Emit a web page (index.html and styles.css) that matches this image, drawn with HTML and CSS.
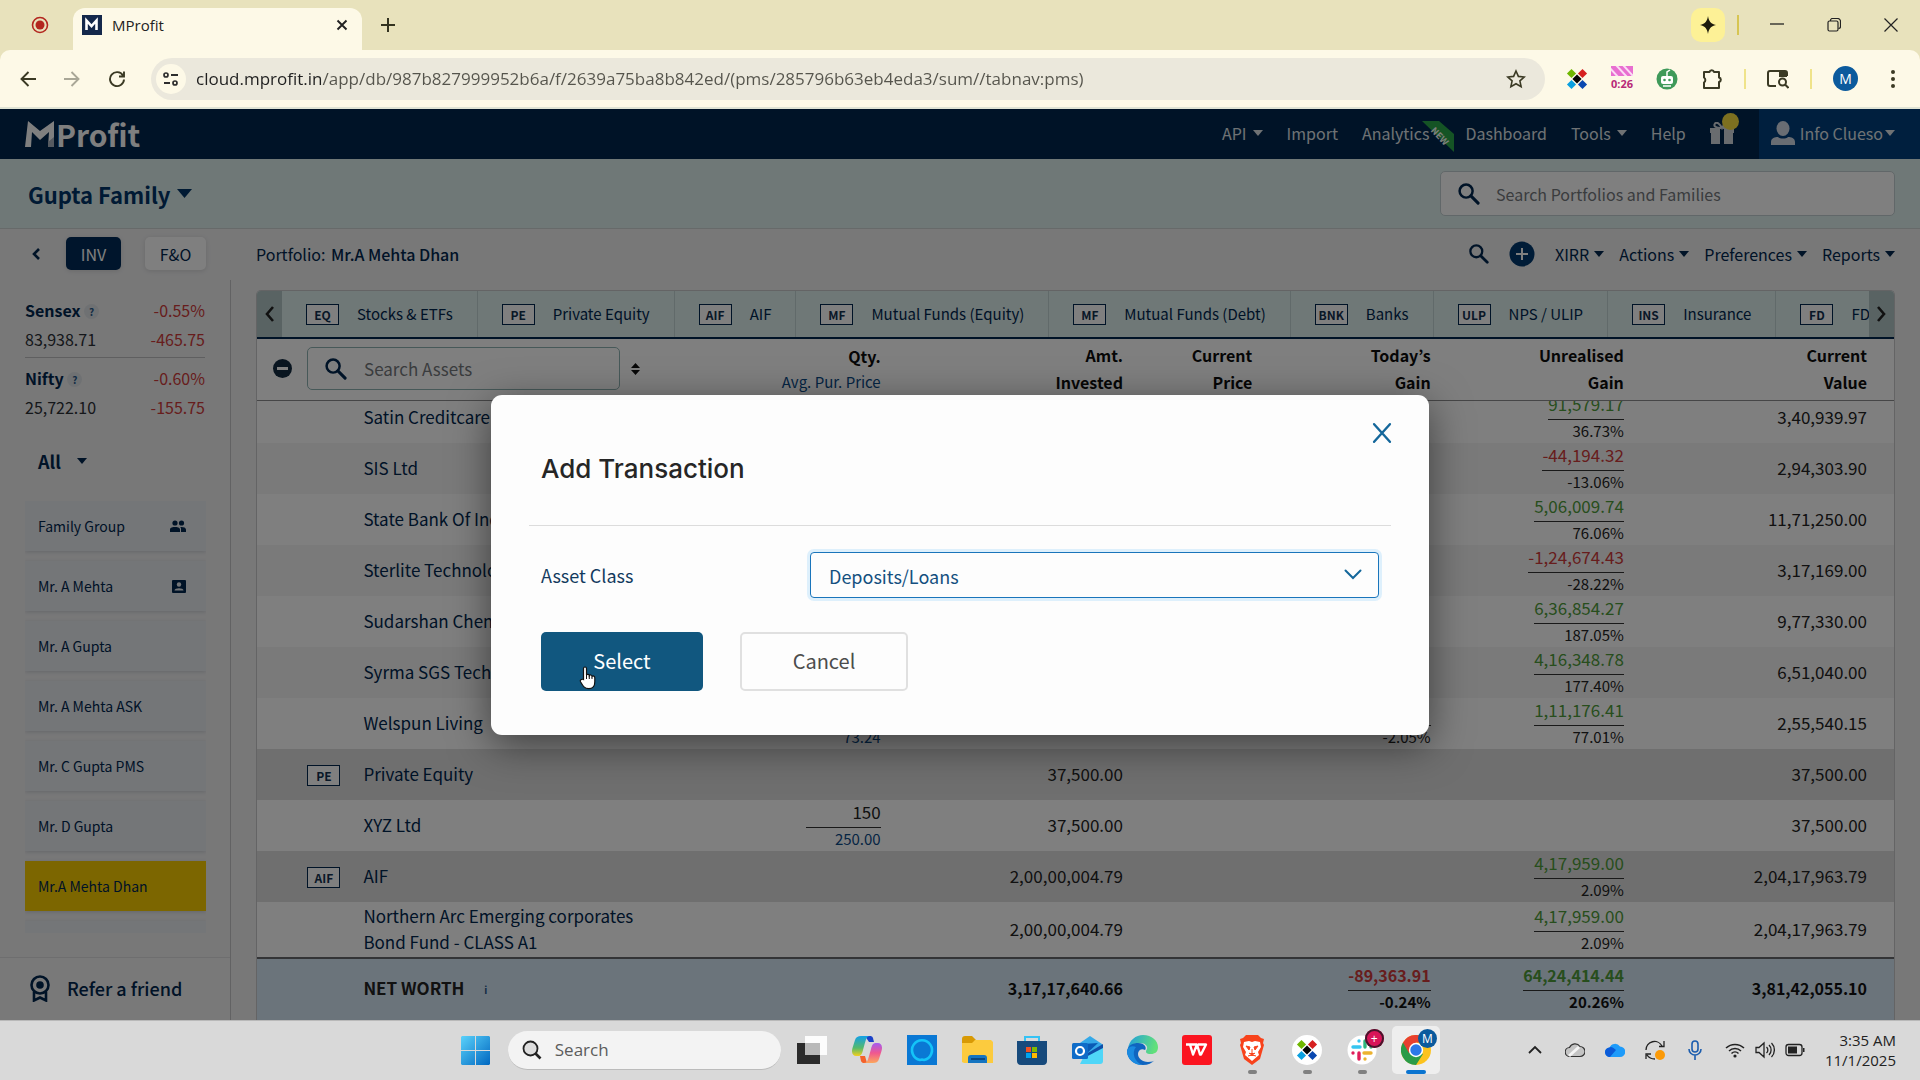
FILE: index.html
```html
<!DOCTYPE html>
<html lang="en">
<head>
<meta charset="utf-8">
<title>MProfit</title>
<link rel="stylesheet" href="styles.css">
</head>
<body>
<svg width="0" height="0" class="sprite" aria-hidden="true">
  <symbol id="search" viewBox="0 0 24 24"><circle cx="9.500" cy="9.500" r="6.800" fill="none" stroke="currentColor" stroke-width="2.600"/><path d="M14.500 14.500L22 22" stroke="currentColor" stroke-width="3.200" stroke-linecap="round"/></symbol>
  <symbol id="caret" viewBox="0 0 10 6"><path d="M0 0h10L5 6z" fill="currentColor"/></symbol>
  <symbol id="cross" viewBox="0 0 20 20"><path d="M2 2l16 16M18 2L2 18" stroke="currentColor" stroke-width="2.200" stroke-linecap="round"/></symbol>
  <symbol id="pinwheel" viewBox="0 0 24 24"><path d="M6 1l5 5-5 5-5-5z" fill="#6fb700"/><path d="M18 1l5 5-5 5-5-5z" fill="#d62020"/><path d="M6 13l5 5-5 5-5-5z" fill="#0aa0e0"/><path d="M18 13l5 5-5 5-5-5z" fill="#0a48b0"/><path d="M12 7l5 5-5 5-5-5z" fill="#050505"/></symbol>
</svg>

<header class="browser">
  <div class="tabstrip">
    <svg class="record" width="18" height="18" viewBox="0 0 18 18"><circle cx="9" cy="9" r="7.500" fill="none" stroke="#b3261e" stroke-width="1.600"/><circle cx="9" cy="9" r="4.500" fill="#b3261e"/></svg>
    <div class="tab">
      <svg width="20" height="20" viewBox="0 0 20 20"><path fill="#14284b" d="M0 0h20v20H0z"/><path d="M4.500 15V5.500l5 5.500 5-5.500V15" fill="none" stroke="#fff" stroke-width="2.600"/></svg>
      <span class="tab-title">MProfit</span>
      <button class="plain" aria-label="Close tab"><svg width="12" height="12" viewBox="0 0 12 12"><path d="M1.500 1.500l9 9M10.500 1.500l-9 9" stroke="#222" stroke-width="1.900"/></svg></button>
    </div>
    <button class="plain new-tab" aria-label="New tab"><svg width="14" height="14" viewBox="0 0 14 14"><path d="M7 0v14M0 7h14" stroke="#333320" stroke-width="2"/></svg></button>
    <div class="window-controls">
      <button class="plain sparkle" aria-label="Assistant"><svg width="16" height="18" viewBox="0 0 16 18"><path d="M8 0c1 5.500 2.500 7.500 8 9-5.500 1.500-7 3.500-8 9-1-5.500-2.500-7.500-8-9 5.500-1.500 7-3.500 8-9z" fill="#1d1b0c"/></svg></button>
      <span class="divider gold"></span>
      <button class="plain win" aria-label="Minimise"><svg width="14" height="14" viewBox="0 0 14 14"><path d="M0 6h14" stroke="#222" stroke-width="1.300"/></svg></button>
      <button class="plain win" aria-label="Restore"><svg width="14" height="14" viewBox="0 0 14 14"><rect x="1" y="3" width="10" height="10" rx="1.500" fill="none" stroke="#222" stroke-width="1.200"/><path d="M3.500 3V2.500a2 2 0 012-2h5a3 3 0 013 3v5a2 2 0 01-2 2" fill="none" stroke="#222" stroke-width="1.200"/></svg></button>
      <button class="plain win" aria-label="Close"><svg width="14" height="14" viewBox="0 0 14 14"><path d="M.5.5l13 13M13.500.5l-13 13" stroke="#222" stroke-width="1.200"/></svg></button>
    </div>
  </div>
  <div class="toolbar">
    <button class="plain nav-btn" aria-label="Back"><svg width="16" height="16" viewBox="0 0 16 16"><path d="M8.500 1L1.500 8l7 7M2 8h14" fill="none" stroke="#3b3a24" stroke-width="1.900"/></svg></button>
    <button class="plain nav-btn" aria-label="Forward"><svg width="16" height="16" viewBox="0 0 16 16"><path d="M7.500 1l7 7-7 7M14 8H0" fill="none" stroke="#a9a797" stroke-width="1.900"/></svg></button>
    <button class="plain nav-btn" aria-label="Reload"><svg width="18" height="18" viewBox="0 0 18 18"><path d="M15 5.500A7 7 0 1016 9.500M16 1.500v5h-5" fill="none" stroke="#3b3a24" stroke-width="1.900"/></svg></button>
    <div class="omnibox">
      <span class="site-chip"><svg width="16" height="16" viewBox="0 0 16 16"><path d="M8 4h7M1 12h6" stroke="#2d2d2d" stroke-width="2"/><circle cx="3" cy="4" r="2" fill="none" stroke="#2d2d2d" stroke-width="1.700"/><circle cx="12" cy="12" r="2" fill="none" stroke="#2d2d2d" stroke-width="1.700"/></svg></span>
      <input class="url" aria-label="Address" value="cloud.mprofit.in/app/db/987b827999952b6a/f/2639a75ba8b842ed/(pms/285796b63eb4eda3/sum//tabnav:pms)">
      <svg width="20" height="20" viewBox="0 0 20 20"><path d="M10 2l2.400 5.400 5.800.6-4.300 3.900 1.200 5.800L10 14.700l-5.100 3 1.200-5.800L1.800 8l5.800-.6z" fill="none" stroke="#3b3a24" stroke-width="1.600"/></svg>
    </div>
    <div class="extensions">
      <svg width="22" height="22"><use href="#pinwheel"/></svg>
      <span class="timer"><svg width="22" height="10" viewBox="0 0 22 10"><path fill="#e86fd0" d="M0 0h22v10H0z"/><path d="M5-1l11 12M12-1l11 12M-2 1l10 11" stroke="#fbdcf5" stroke-width="2"/></svg><b>0:26</b></span>
      <svg width="22" height="22" viewBox="0 0 22 22"><circle cx="11" cy="11" r="10.500" fill="#3f9a5a"/><path d="M11 8V4l3-2" stroke="#fff" stroke-width="1.500" fill="none"/><rect x="5" y="8" width="12" height="8" rx="2" fill="#fff"/><circle cx="8.500" cy="12" r="1.300" fill="#3f9a5a"/><circle cx="13.500" cy="12" r="1.300" fill="#3f9a5a"/><path d="M7 18h8" stroke="#fff" stroke-width="1.500"/></svg>
      <svg width="22" height="22" viewBox="0 0 22 22"><path d="M3 4h5.500a2.300 2.300 0 014.500 0h5v5.500a2.300 2.300 0 010 4.500v6H3v-5.500a3 3 0 000-5z" fill="none" stroke="#3b3a24" stroke-width="2" stroke-linejoin="round"/></svg>
      <span class="divider"></span>
      <svg width="22" height="20" viewBox="0 0 22 20"><path d="M9 17H3a2 2 0 01-2-2V4a2 2 0 012-2h15a2 2 0 012 2v3" fill="none" stroke="#3b3a24" stroke-width="2"/><path d="M12 2h8v6h-8z" fill="#3b3a24"/><circle cx="15.500" cy="13" r="3.500" fill="#fdf9e7" stroke="#3b3a24" stroke-width="2"/><path d="M18 15.500l3.500 3.500" stroke="#3b3a24" stroke-width="2"/></svg>
      <span class="divider"></span>
      <span class="avatar">M</span>
      <svg width="4" height="18" viewBox="0 0 4 18"><g fill="#3b3a24"><circle cx="2" cy="2" r="2"/><circle cx="2" cy="9" r="2"/><circle cx="2" cy="16" r="2"/></g></svg>
    </div>
  </div>
</header>

<div class="app">
  <div class="app-bar">
    <svg class="logo" width="124" height="41" viewBox="0 0 124 41"><path d="M0 29L3 3l12 10L29 3v26h-6l1-15-9 8-8-8-1 15z" fill="#fff"/><path d="M23 24l6-5v10h-6z" fill="#aab4c0"/><text x="31" y="29" class="logo-text">Profit</text></svg>
    <nav class="main-nav">
      <a href="#">API <svg class="caret" width="10" height="6"><use href="#caret"/></svg></a>
      <a href="#">Import</a>
      <a href="#" class="analytics">Analytics<svg class="ribbon" width="32" height="32" viewBox="0 0 32 32"><path d="M0 0h17l15 13v18z" fill="#2ba84a"/><text x="13" y="1" transform="rotate(46)" class="ribbon-text">NEW</text></svg></a>
      <a href="#">Dashboard</a>
      <a href="#">Tools <svg class="caret" width="10" height="6"><use href="#caret"/></svg></a>
      <a href="#">Help</a>
      <a href="#" class="gift" aria-label="Offers"><svg width="24" height="22" viewBox="0 0 24 22"><path d="M0 6h24v5h-1v11H1V11H0z" fill="#d3d9df"/><path d="M10 6h4v16h-4z" fill="#00264e"/><path d="M11 6C6 6 3 4 5 1.500 7-.5 10 2 12 6c2-4 5-6.500 7-4.500 2 2.500-1 4.500-6 4.500" fill="none" stroke="#d3d9df" stroke-width="2"/></svg><span class="dot"></span></a>
    </nav>
    <a href="#" class="account"><svg width="24" height="24" viewBox="0 0 24 24"><ellipse cx="12" cy="7.500" rx="6.500" ry="7.500" fill="#d3dbe6"/><path d="M0 24v-3c0-4 4-5 7-5 2 2 8 2 10 0 3 0 7 1 7 5v3z" fill="#d3dbe6"/></svg><span>Info Clueso</span><svg class="caret" width="10" height="6"><use href="#caret"/></svg></a>
  </div>

  <div class="family-bar">
    <button class="plain family">Gupta Family <svg width="15" height="9"><use href="#caret"/></svg></button>
    <label class="box family-search"><svg width="23" height="23"><use href="#search"/></svg><input type="search" placeholder="Search Portfolios and Families" aria-label="Search Portfolios and Families"></label>
  </div>

  <div class="portfolio-bar">
    <button class="plain back" aria-label="Collapse"><svg width="8" height="12" viewBox="0 0 8 12"><path d="M7 1L2 6l5 5" fill="none" stroke="#00264e" stroke-width="2.600"/></svg></button>
    <button class="mode active">INV</button>
    <button class="mode">F&amp;O</button>
    <p class="portfolio-name">Portfolio: <b>Mr.A Mehta Dhan</b></p>
    <div class="actions">
      <button class="plain" aria-label="Search"><svg width="21" height="21"><use href="#search"/></svg></button>
      <button class="plain add" aria-label="Add transaction"><svg width="26" height="26" viewBox="0 0 26 26"><circle cx="13" cy="13" r="12.500" fill="#00396f"/><path d="M13 7v12M7 13h12" stroke="#fff" stroke-width="2"/></svg></button>
      <button class="plain">XIRR <svg width="10" height="6"><use href="#caret"/></svg></button>
      <button class="plain">Actions <svg width="10" height="6"><use href="#caret"/></svg></button>
      <button class="plain">Preferences <svg width="10" height="6"><use href="#caret"/></svg></button>
      <button class="plain">Reports <svg width="10" height="6"><use href="#caret"/></svg></button>
    </div>
  </div>

  <div class="workspace">
    <aside class="sidebar">
      <div class="index">
        <div class="pair"><b>Sensex <i class="hint">?</i></b><span class="loss">-0.55%</span></div>
        <div class="pair"><span>83,938.71</span><span class="loss">-465.75</span></div>
      </div>
      <div class="index">
        <div class="pair"><b>Nifty <i class="hint">?</i></b><span class="loss">-0.60%</span></div>
        <div class="pair"><span>25,722.10</span><span class="loss">-155.75</span></div>
      </div>
      <button class="plain filter">All <svg width="10" height="6"><use href="#caret"/></svg></button>
      <ul class="portfolios">
        <li><a href="#">Family Group <svg width="16" height="12" viewBox="0 0 16 12"><g fill="#00264e"><circle cx="5" cy="3" r="2.600"/><circle cx="11.500" cy="3" r="2.600"/><path d="M0 12V9.500C0 7.500 3 7 5 7s5 .5 5 2.500V12zM11 12V9c0-1-.4-1.600-1-2 3-.3 6 .4 6 2.500V12z"/></g></svg></a></li>
        <li><a href="#">Mr. A Mehta <svg width="14" height="13" viewBox="0 0 14 13"><rect x="0" y="0" width="14" height="13" rx="1" fill="#00264e"/><circle cx="7" cy="4.500" r="2.200" fill="#e8ecf1"/><path d="M2.500 10.500c0-3 9-3 9 0z" fill="#e8ecf1"/></svg></a></li>
        <li><a href="#">Mr. A Gupta</a></li>
        <li><a href="#">Mr. A Mehta ASK</a></li>
        <li><a href="#">Mr. C Gupta PMS</a></li>
        <li><a href="#">Mr. D Gupta</a></li>
        <li><a href="#" class="current">Mr.A Mehta Dhan</a></li>
        <li><a href="#" aria-label="Next portfolio"></a></li>
      </ul>
      <a href="#" class="refer"><svg width="20" height="27" viewBox="0 0 20 27"><circle cx="10" cy="10" r="8.500" fill="none" stroke="#00264e" stroke-width="2.600"/><circle cx="10" cy="10" r="3.800" fill="#00264e"/><path d="M4 17v8.500l6-3 6 3V17" fill="none" stroke="#00264e" stroke-width="2.600"/></svg>Refer a friend</a>
    </aside>

    <main class="holdings">
      <nav class="classes">
        <button class="plain arrow" aria-label="Previous"><svg width="9" height="16" viewBox="0 0 9 16"><path d="M8 1L2 8l6 7" fill="none" stroke="#222" stroke-width="2.600"/></svg></button>
        <div class="class-list">
          <a href="#"><span class="tag">EQ</span>Stocks &amp; ETFs</a>
          <a href="#"><span class="tag">PE</span>Private Equity</a>
          <a href="#"><span class="tag">AIF</span>AIF</a>
          <a href="#"><span class="tag">MF</span>Mutual Funds (Equity)</a>
          <a href="#"><span class="tag">MF</span>Mutual Funds (Debt)</a>
          <a href="#"><span class="tag">BNK</span>Banks</a>
          <a href="#"><span class="tag">ULP</span>NPS / ULIP</a>
          <a href="#"><span class="tag">INS</span>Insurance</a>
          <a href="#"><span class="tag">FD</span>FD</a>
        </div>
        <button class="plain arrow" aria-label="Next"><svg width="9" height="16" viewBox="0 0 9 16"><path d="M1 1l6 7-6 7" fill="none" stroke="#222" stroke-width="2.600"/></svg></button>
      </nav>

      <table class="grid head">
        <colgroup><col class="c-tag"><col class="c-name"><col class="c-qty"><col class="c-amt"><col class="c-price"><col class="c-today"><col class="c-gain"><col class="c-value"></colgroup>
        <tr>
          <th colspan="2"><div class="asset-search">
            <svg width="19" height="19" viewBox="0 0 19 19"><circle cx="9.500" cy="9.500" r="9.500" fill="#122a40"/><path d="M4 9.500h11" stroke="#fff" stroke-width="3"/></svg>
            <label class="box"><svg width="23" height="23"><use href="#search"/></svg><input type="search" placeholder="Search Assets" aria-label="Search Assets"></label>
            <svg width="9" height="12" viewBox="0 0 9 12"><path d="M0 5h9L4.500 0zM0 7h9l-4.500 5z" fill="#111"/></svg>
          </div></th>
          <th>Qty.<small>Avg. Pur. Price</small></th>
          <th>Amt.<br>Invested</th>
          <th>Current<br>Price</th>
          <th>Today’s<br>Gain</th>
          <th>Unrealised<br>Gain</th>
          <th>Current<br>Value</th>
        </tr>
      </table>

      <div class="rows">
        <table class="grid">
          <colgroup><col class="c-tag"><col class="c-name"><col class="c-qty"><col class="c-amt"><col class="c-price"><col class="c-today"><col class="c-gain"><col class="c-value"></colgroup>
          <tr><td></td><td>Satin Creditcare</td><td></td><td></td><td></td><td></td><td><span class="top gain">91,579.17</span><small>36.73%</small></td><td>3,40,939.97</td></tr>
          <tr class="alt"><td></td><td>SIS Ltd</td><td></td><td></td><td></td><td></td><td><span class="top loss">-44,194.32</span><small>-13.06%</small></td><td>2,94,303.90</td></tr>
          <tr><td></td><td>State Bank Of India</td><td></td><td></td><td></td><td></td><td><span class="top gain">5,06,009.74</span><small>76.06%</small></td><td>11,71,250.00</td></tr>
          <tr class="alt"><td></td><td>Sterlite Technologies</td><td></td><td></td><td></td><td></td><td><span class="top loss">-1,24,674.43</span><small>-28.22%</small></td><td>3,17,169.00</td></tr>
          <tr><td></td><td>Sudarshan Chemical</td><td></td><td></td><td></td><td></td><td><span class="top gain">6,36,854.27</span><small>187.05%</small></td><td>9,77,330.00</td></tr>
          <tr class="alt"><td></td><td>Syrma SGS Technology</td><td></td><td></td><td></td><td></td><td><span class="top gain">4,16,348.78</span><small>177.40%</small></td><td>6,51,040.00</td></tr>
          <tr><td></td><td>Welspun Living</td><td><span class="top">&nbsp;</span><small class="avg">73.24</small></td><td></td><td></td><td><span class="top">&nbsp;</span><small>-2.05%</small></td><td><span class="top gain">1,11,176.41</span><small>77.01%</small></td><td>2,55,540.15</td></tr>
          <tr class="group"><td><span class="tag">PE</span></td><td>Private Equity</td><td></td><td>37,500.00</td><td></td><td></td><td></td><td>37,500.00</td></tr>
          <tr><td></td><td>XYZ Ltd</td><td><span class="top wide">150</span><small class="avg">250.00</small></td><td>37,500.00</td><td></td><td></td><td></td><td>37,500.00</td></tr>
          <tr class="group"><td><span class="tag">AIF</span></td><td>AIF</td><td></td><td>2,00,00,004.79</td><td></td><td></td><td><span class="top gain">4,17,959.00</span><small>2.09%</small></td><td>2,04,17,963.79</td></tr>
          <tr class="tall"><td></td><td>Northern Arc Emerging corporates Bond Fund - CLASS A1</td><td></td><td>2,00,00,004.79</td><td></td><td></td><td><span class="top gain">4,17,959.00</span><small>2.09%</small></td><td>2,04,17,963.79</td></tr>
        </table>
      </div>

      <table class="grid foot">
        <colgroup><col class="c-tag"><col class="c-name"><col class="c-qty"><col class="c-amt"><col class="c-price"><col class="c-today"><col class="c-gain"><col class="c-value"></colgroup>
        <tr><td></td><td>NET WORTH <i class="hint">i</i></td><td></td><td>3,17,17,640.66</td><td></td><td><span class="top loss">-89,363.91</span><small>-0.24%</small></td><td><span class="top gain">64,24,414.44</span><small>20.26%</small></td><td>3,81,42,055.10</td></tr>
      </table>
    </main>
  </div>

  <div class="backdrop">
    <form class="dialog" role="dialog" aria-labelledby="dialog-title">
      <button type="button" class="plain dismiss" aria-label="Close"><svg width="20" height="22" viewBox="0 0 20 20" preserveAspectRatio="none"><use href="#cross"/></svg></button>
      <h2 id="dialog-title">Add Transaction</h2>
      <div class="field">
        <label for="asset-class">Asset Class</label>
        <div class="select-wrap">
          <select id="asset-class"><option>Deposits/Loans</option></select>
          <svg width="18" height="11" viewBox="0 0 18 11"><path d="M1.500 1.500L9 9l7.500-7.500" fill="none" stroke="#14679b" stroke-width="2" stroke-linecap="round"/></svg>
        </div>
      </div>
      <div class="buttons">
        <button type="button" class="btn primary">Select<svg class="pointer" width="18" height="24" viewBox="0 0 18 24"><path d="M4.500 13.500V2.500c0-2 3-2 3 0V9c.5-1 2.700-.8 2.800.6.600-1 2.600-.8 2.800.8.700-.8 2.700-.5 2.700 1.300v4c0 4-2 7-6 7-4.500 0-6-3-8.300-7-.9-1.700 1-3 3-2.200z" fill="#fff" stroke="#111" stroke-width="1.200"/><path d="M7.500 9v4M10.300 10v3M13 10.500V13" stroke="#111" stroke-width="1"/></svg></button>
        <button type="button" class="btn">Cancel</button>
      </div>
    </form>
  </div>
</div>

<footer class="taskbar">
  <div class="launcher">
    <svg width="29" height="29" viewBox="0 0 29 29"><defs><linearGradient id="win" x1="0" y1="0" x2="1" y2="1"><stop offset="0" stop-color="#5ad2fb"/><stop offset="1" stop-color="#0067c0"/></linearGradient></defs><path d="M1 0h13v14H0V1zM15 0h13l1 1v13H15zM0 15h14v14H1l-1-1zM15 15h14v13l-1 1H15z" fill="url(#win)"/></svg>
    <label class="task-search"><svg width="20" height="20" viewBox="0 0 20 20"><circle cx="8.500" cy="8.500" r="7" fill="#dedede" stroke="#222" stroke-width="1.800"/><path d="M13.500 13.500l5 5" stroke="#222" stroke-width="2.600"/></svg><input type="search" placeholder="Search" aria-label="Search Windows"></label>
    <span class="task"><svg width="30" height="30" viewBox="0 0 30 30"><path d="M0 8h23v21H0z" fill="#2b2b2b"/><path d="M8 1h22v19H8z" fill="#fff" opacity=".9"/><path d="M8 8h15v12H8z" fill="#b9b9b9"/></svg></span>
    <span class="task"><svg width="30" height="28" viewBox="0 0 30 28"><defs><linearGradient id="cop1" x1="0" y1="0" x2="0" y2="1"><stop offset="0" stop-color="#12a0e8"/><stop offset=".6" stop-color="#56ba6a"/><stop offset="1" stop-color="#f4cf1c"/></linearGradient><linearGradient id="cop2" x1="0" y1="0" x2="0" y2="1"><stop offset="0" stop-color="#a45cf0"/><stop offset=".5" stop-color="#f0588f"/><stop offset="1" stop-color="#fca75c"/></linearGradient></defs><path d="M13 0h5c3 0 3 2 4 6h-5z" fill="#1b42c8"/><path d="M8 20h5l2 7h-3c-3 0-3-2-4-7z" fill="#f4622c"/><path d="M9 0h9c-4 0-4 4-7 14-1 4-2 6-5 6H4c-3 0-5-3-3.500-8L3 4c1-3 3-4 6-4z" fill="url(#cop1)"/><path d="M21 27h-9c4 0 4-4 7-14 1-4 2-6 5-6h2c3 0 5 3 3.500 8L27 23c-1 3-3 4-6 4z" fill="url(#cop2)"/></svg></span>
    <span class="task"><svg width="30" height="30" viewBox="0 0 30 30"><path d="M0 0h30v30H0z" fill="#0a78d4"/><path d="M13 25a10 10 0 114 0l-2-.5z" fill="none" stroke="#14c4f8" stroke-width="2.600"/></svg></span>
    <span class="task"><svg width="31" height="28" viewBox="0 0 31 28"><path d="M0 3c0-2 1-3 3-3h7l4 4h15v6H0z" fill="#d89a05"/><path d="M0 7h10l3-3h16l2 2v21H2l-2-1z" fill="#fccb3e"/><path d="M6 27v-5c0-2 1-3 3-3h13c2 0 3 1 3 3v5z" fill="#1574c0"/><path d="M9 23h14" stroke="#083a6c" stroke-width="1.500"/></svg></span>
    <span class="task"><svg width="30" height="30" viewBox="0 0 30 30"><path d="M8 7V2h14v5" fill="none" stroke="#35c3f5" stroke-width="2"/><path d="M0 6h30v20c0 2-1 4-4 4H4c-3 0-4-2-4-4z" fill="#174a7c"/><path fill="#f25022" d="M9 12h5v5H9z"/><path fill="#7fba00" d="M15 12h5v5h-5z"/><path fill="#00a4ef" d="M9 18h5v5H9z"/><path fill="#ffb900" d="M15 18h5v5h-5z"/></svg></span>
    <span class="task"><svg width="31" height="28" viewBox="0 0 31 28"><path d="M5 9L18 0l12 8v5L14 22H5z" fill="#35a9e8"/><path d="M10 8l16-1-14 13z" fill="#0a5bb5"/><path d="M12 20L31 10v15c0 2-1 3-3 3H8z" fill="#4fd6f8"/><path d="M14 18L31 8v4L12 22z" fill="#0f4fa8"/><rect x="0" y="7" width="16" height="16" rx="1.500" fill="#0f6cc8"/><circle cx="8" cy="15" r="4" fill="none" stroke="#fff" stroke-width="2.200"/></svg></span>
    <span class="task"><svg width="31" height="30" viewBox="0 0 31 30"><defs><linearGradient id="edge" x1="0" y1="0" x2="1" y2=".2"><stop offset="0" stop-color="#1f9de0"/><stop offset="1" stop-color="#62e07a"/></linearGradient></defs><path d="M1 14C2 5 9 0 16 0c9 0 15 6 15 12 0 5-3 7-7 7-5 0-6-2-4-5 1-3-2-6-7-6S2 11 1 14z" fill="url(#edge)"/><path d="M0 16C1 10 6 8 11 8c7 0 9 5 7 7-3-2-7 0-7 4s4 8 10 8c4 0 6-1 7-2-3 3-7 5-12 5C7 30 0 24 0 16z" fill="#0f65c0"/><path d="M9 12c-5 6-1 15 6 18C7 30 0 24 0 16c1-4 5-6 9-4z" fill="#1a8ae0"/></svg></span>
    <span class="task"><svg width="30" height="30" viewBox="0 0 30 30"><rect width="30" height="30" rx="3" fill="#fb1420"/><path d="M4 9.500h4l3 10 4-10 3 10h1l5-10h-8M8 9.500h7" fill="none" stroke="#fff" stroke-width="2.400" stroke-linejoin="round"/></svg></span>
    <span class="task running"><svg width="26" height="30" viewBox="0 0 26 30"><path d="M7 0h12l3 3 3 1-1 4 1 2-4 14-8 6-8-6L1 10l1-2-1-4 3-1z" fill="#f8431c"/><path d="M5 7l5-1 3 1 3-1 5 1 1 5-3 5 1 3-7 6-7-6 1-3-3-5z" fill="#fff"/><path d="M7 11l4 1-1 3zM19 11l-4 1 1 3zM10 18l3 2 3-2M13 14v5M9 21l4-1 4 1" fill="#f8431c" stroke="#f8431c"/></svg></span>
    <span class="task running"><svg width="30" height="30" viewBox="0 0 30 30"><circle cx="15" cy="15" r="15" fill="#fff"/><svg x="4" y="4" width="22" height="22"><use href="#pinwheel"/></svg></svg></span>
    <span class="task running"><svg width="30" height="30" viewBox="0 0 30 30"><circle cx="15" cy="15" r="14.500" fill="#fff"/><g fill="none" stroke-width="3.400" stroke-linecap="round"><path d="M6 12h7M12 6h0" stroke="#36c5f0"/><path d="M18 6v6M24 12h0" stroke="#2eb67d"/><path d="M17 18h7M18 24h0" stroke="#ecb22e"/><path d="M12 18v6M6 18h0" stroke="#e01e5a"/></g></svg><span class="badge red">+</span></span>
    <span class="task running focus"><svg width="30" height="30" viewBox="0 0 30 30"><circle cx="15" cy="15" r="15" fill="#fcc31e"/><path d="M2 7.500A15 15 0 0015 30l7-11-7-4z" fill="#2a9b48"/><path d="M2 7.500a15 15 0 0126 0H15v7.500L8 18z" fill="#e8402f"/><circle cx="15" cy="15" r="7.200" fill="#fff"/><circle cx="15" cy="15" r="5.700" fill="#2b78e8"/></svg><span class="badge blue">M</span></span>
  </div>
  <div class="tray">
    <svg width="20" height="20" viewBox="0 0 20 20"><path d="M4 13l6-6 6 6" fill="none" stroke="#222" stroke-width="1.800"/></svg>
    <svg width="20" height="20" viewBox="0 0 20 20"><path d="M5 16.500a4.500 4.500 0 01-.5-9A6 6 0 0115 6.500a5 5 0 010 10z" fill="#c4c4c4" stroke="#333" stroke-width="1.200"/><path d="M4 16L14 7" stroke="#f4f4f4" stroke-width="3"/></svg>
    <svg width="20" height="20" viewBox="0 0 20 20"><path d="M5 17a4.700 4.700 0 01-.5-9.500A6 6 0 0115 6.500a5.200 5.200 0 010 10.500z" fill="#1e9bfa"/><path d="M5 17a4.700 4.700 0 01-.5-9.500C6 6 9 8 11 10z" fill="#0b5bd8"/></svg>
    <svg width="20" height="20" viewBox="0 0 20 20"><path d="M1 10a8.500 8.500 0 0116-4M19 1v5.500h-5M1 19v-5h5M2 15c2 3 5 4 8 4" fill="none" stroke="#222" stroke-width="1.300"/><circle cx="15" cy="15" r="5" fill="#fb9a08"/></svg>
    <svg width="20" height="20" viewBox="0 0 20 20"><rect x="7" y="1" width="6" height="11" rx="3" fill="none" stroke="#1c5dae" stroke-width="1.600"/><path d="M4 9a6 6 0 0012 0M10 15v5" fill="none" stroke="#1c5dae" stroke-width="1.600"/></svg>
    <div class="status">
      <svg width="20" height="20" viewBox="0 0 20 20"><g fill="none" stroke="#222" stroke-width="1.500"><path d="M1 8a13 13 0 0118 0M4 11a8.500 8.500 0 0112 0M6.500 13.500a5 5 0 017 0"/></g><circle cx="10" cy="16" r="1.600" fill="#222"/></svg>
      <svg width="20" height="20" viewBox="0 0 20 20"><g fill="none" stroke="#222" stroke-width="1.300"><path d="M1 7.500h3L9 3v14l-5-4.500H1zM11.500 7a4 4 0 010 6M14 5a7 7 0 010 10M16.500 3a10 10 0 010 14"/></g></svg>
      <svg width="20" height="20" viewBox="0 0 20 20"><rect x="1" y="4.500" width="16" height="11" rx="2.500" fill="none" stroke="#222" stroke-width="1.300"/><rect x="3" y="6.500" width="9" height="7" fill="#222"/><path d="M18 8h1.500v4H18z" fill="#222"/></svg>
    </div>
    <time>3:35 AM<br>11/1/2025</time>
  </div>
</footer>
</body>
</html>
```
FILE: styles.css
```css
* { box-sizing: border-box; }

:root {
  --navy: #00264e;
  --ui: "Noto Sans CJK JP", "Noto Sans", sans-serif;
  --system: "Open Sans", "Noto Sans", sans-serif;
}

body {
  margin: 0;
  height: 100vh;
  display: flex;
  flex-direction: column;
  overflow: hidden;
  font-family: var(--system);
}

.sprite { display: none; }
svg { flex: none; }
a { color: inherit; text-decoration: none; }
input, button, select { font: inherit; color: inherit; }
input { border: 0; outline: 0; background: none; padding: 0; min-width: 0; flex: 1; }

.plain {
  border: 0;
  background: none;
  padding: 0;
  display: flex;
  align-items: center;
  gap: 6px;
  white-space: nowrap;
}

/* Browser window */
.browser { background: #e8e2bc; }

.tabstrip { display: flex; align-items: center; height: 50px; padding-left: 31px; }
.record { margin-right: 24px; }

.tab {
  align-self: flex-end;
  display: flex;
  align-items: center;
  width: 289px;
  height: 42px;
  padding: 0 14px 8px 9px;
  gap: 10px;
  border-radius: 12px 12px 0 0;
  background: #fdf9e7;
  font-size: 15px;
  color: #222;
}
.tab-title { flex: 1; }
.new-tab { margin-left: 19px; }

.window-controls { display: flex; align-items: center; margin-left: auto; padding-right: 22px; }
.sparkle { width: 34px; height: 34px; justify-content: center; border-radius: 10px; background: #fdf196; }
.divider { width: 2px; height: 20px; background: #efe38a; }
.divider.gold { background: #d6c552; margin: 0 31px 0 12px; }
.win + .win { margin-left: 43px; }

.toolbar {
  display: flex;
  align-items: center;
  height: 59px;
  padding: 0 25px 0 20px;
  border-radius: 10px 10px 0 0;
  border-bottom: 2px solid #dfe3d4;
  background: #fdf9e7;
}
.nav-btn { width: 16px; margin-right: 28px; }
.nav-btn + .nav-btn + .nav-btn { width: 18px; margin-right: 25px; }

.omnibox {
  flex: 1;
  display: flex;
  align-items: center;
  height: 42px;
  padding: 0 19px 0 5px;
  border-radius: 21px;
  background: #ebe8dc;
}
.site-chip {
  display: flex;
  align-items: center;
  justify-content: center;
  width: 30px;
  height: 30px;
  margin-right: 10px;
  border-radius: 50%;
  background: #fdf9e7;
}
.url {
  font-size: 17px;
  background: linear-gradient(to right, #1f1f1f 125px, #55544c 125px);
  background-clip: text;
  color: transparent;
}

.extensions { display: flex; align-items: center; gap: 23px; padding-left: 21px; }
.extensions .divider { margin: 0 -2px; }
.timer { display: flex; flex-direction: column; align-items: center; font-size: 11px; line-height: 16px; color: #b82a78; }
.avatar {
  width: 25px;
  height: 25px;
  margin-right: 10px;
  border-radius: 50%;
  background: #0b5a9d;
  color: #fff;
  font-size: 14px;
  line-height: 25px;
  text-align: center;
}

/* Application */
.app {
  position: relative;
  flex: 1;
  min-height: 0;
  display: flex;
  flex-direction: column;
  font-family: var(--ui);
  font-size: 16px;
  line-height: 24px;
  color: var(--navy);
  background: #f0f0f1;
}

.app-bar { display: flex; height: 50px; background: var(--navy); color: #dfe4e9; }
.logo { margin: 9px 0 0 25px; overflow: visible; }
.logo-text { font: 700 30px "Noto Sans CJK JP", sans-serif; fill: #fff; }
.main-nav { display: flex; align-items: center; gap: 24px; margin-left: auto; padding: 0 25px 2px 0; }
.main-nav a { position: relative; display: flex; align-items: center; gap: 6px; }
.main-nav .analytics { padding-right: 12px; }
.ribbon { position: absolute; left: 60px; top: 0; }
.ribbon-text { font: 700 9px "Noto Sans CJK JP", sans-serif; fill: #fff; }
.dot { position: absolute; right: -5px; top: -9px; width: 17px; height: 17px; border-radius: 50%; background: #fae040; }
.account { display: flex; align-items: center; gap: 5px; padding: 0 25px 2px 12px; background: #003e7c; }
.account .caret { margin-left: -3px; }

.family-bar {
  display: flex;
  align-items: center;
  justify-content: space-between;
  height: 70px;
  padding: 0 25px 0 28px;
  border-bottom: 1px solid #cfd4d4;
  background: #def0ee;
}
.family { gap: 6px; font-size: 22px; font-weight: 700; color: #003468; }

.box { display: flex; align-items: center; border: 1px solid #c3cfd2; border-radius: 5px; background: #fff; }
.box input::placeholder { color: #75787c; opacity: 1; }
.family-search { width: 455px; height: 45px; padding: 0 16px; gap: 16px; }

.portfolio-bar { display: flex; align-items: center; height: 51px; padding: 0 25px 2px 32px; }
.mode { width: 61px; height: 33px; padding: 0; margin-left: 24px; border: 0; border-radius: 5px; background: #fff; box-shadow: 0 1px 5px rgba(0, 0, 0, 0.12); }
.mode.active { width: 55px; margin-left: 26px; background: #002b58; color: #fff; }
.portfolio-name { margin: 0 0 0 50px; }
.portfolio-name b { margin-left: 2px; font-weight: 500; }
.actions { display: flex; align-items: center; gap: 15px; margin-left: auto; }
.actions .add { margin: 0 5px; }
.actions .plain { gap: 5px; }

.workspace { flex: 1; min-height: 0; display: flex; }

/* Sidebar */
.sidebar { width: 231px; display: flex; flex-direction: column; border-right: 1px solid #c4c4c6; }
.index { margin: 0 25px; padding: 6px 0 3px; color: #2b2f35; }
.index:first-child { padding-top: 16px; border-bottom: 1px solid #bfbfc1; }
.pair { display: flex; justify-content: space-between; line-height: 29px; }
.pair b { font-weight: 700; color: var(--navy); }
.hint {
  display: inline-block;
  width: 15px;
  height: 15px;
  border-radius: 50%;
  background: #dfe3e6;
  font: 700 10px/15px "Noto Sans CJK JP", sans-serif;
  color: #28588a;
  text-align: center;
  vertical-align: 1px;
}
.loss { color: #cf3b3a; }
.gain { color: #4f9c3a; }
.filter { margin: 22px 38px 26px; gap: 16px; font-size: 18px; font-weight: 700; line-height: 28px; }
.portfolios {
  flex: 1;
  min-height: 0;
  margin: 0 24px 24px 25px;
  padding: 0;
  list-style: none;
  display: flex;
  flex-direction: column;
  gap: 10px;
  overflow: hidden;
  font-size: 14px;
}
.portfolios li { flex: none; }
.portfolios a {
  display: flex;
  align-items: center;
  justify-content: space-between;
  height: 50px;
  padding: 0 20px 0 13px;
  background: #e8ecf1;
  box-shadow: 0 1px 4px rgba(0, 30, 60, 0.16);
}
.portfolios .current { background: #f8cd00; }
.refer { display: flex; align-items: center; gap: 17px; height: 63px; padding: 0 0 2px 30px; border-top: 1px solid #dcdcde; font-size: 18px; font-weight: 500; background: #f2f2f3; }

/* Holdings */
.holdings {
  flex: 1;
  min-width: 0;
  display: flex;
  flex-direction: column;
  margin: 10px 25px 0;
  border: solid #c9c9cb;
  border-width: 1px 1px 0;
  border-radius: 5px 5px 0 0;
  background: #fff;
  overflow: hidden;
}
.classes { display: flex; height: 48px; border-bottom: 2px solid var(--navy); background: #def0ee; font-size: 15px; }
.arrow { width: 25px; flex: none; justify-content: center; background: #b3c6c6; }
.class-list { flex: 1; min-width: 0; display: flex; overflow: hidden; }
.class-list a { flex: none; display: flex; align-items: center; gap: 18px; padding: 0 24px; border-right: 1px solid #c3d4d4; white-space: nowrap; }

.tag {
  display: inline-block;
  min-width: 33px;
  height: 21px;
  border: 1px solid var(--navy);
  background: #fff;
  font-size: 12px;
  font-weight: 700;
  line-height: 19px;
  text-align: center;
  color: #12304f;
}

.grid { width: 100%; table-layout: fixed; border-collapse: collapse; font-size: 17px; flex: none; }
.c-tag { width: 6.500%; }
.c-name { width: 23%; }
.c-qty { width: 8.600%; }
.c-amt { width: 14.800%; }
.c-price { width: 7.900%; }
.c-today { width: 10.900%; }
.c-gain { width: 11.800%; }
.c-value { width: 16.500%; }

.grid th, .grid td { padding: 0 0 2px; text-align: right; vertical-align: middle; }
.grid th:last-child, .grid td:last-child { padding-right: 27px; }
.grid small { display: block; font-size: 15px; line-height: 24px; }

.head { height: 62px; border-bottom: 1px solid #8d8d8f; color: #0d0d0d; font-size: 16px; }
.head th { font-weight: 700; line-height: 27px; }
.head small { font-weight: 400; color: #0a4a87; }
.asset-search { display: flex; align-items: center; font-weight: 400; padding-left: 16px; }
.asset-search .box { width: 313px; height: 43px; margin: 0 11px 0 15px; padding: 0 16px; gap: 17px; border-color: #8fb3b3; font-size: 17px; color: var(--navy); }

.rows { flex: 1; min-height: 0; display: flex; flex-direction: column; justify-content: flex-end; overflow: hidden; color: #222; }
.grid td { height: 51px; line-height: 26px; }
.grid td:nth-child(2) { text-align: left; padding-right: 80px; color: var(--navy); }
.alt { background: #f5f5f5; }
.group { background: #dfdfdf; }
.rows .tall td { height: 55px; }
.rows .tag { vertical-align: middle; margin-right: 23px; }
.grid .top { display: inline-block; height: 28px; line-height: 24px; border-bottom: 1px solid #333; vertical-align: top; }
.grid .top + small { line-height: 21px; }
.wide { min-width: 75px; }
.avg { color: #0a4a87; }

.foot { border-top: 2px solid #66696c; background: #d7e8f7; color: #111; font-weight: 700; font-size: 16px; }
.grid.foot td { height: 62px; padding-bottom: 4px; }
.grid.foot td:nth-child(2) { color: #222; font-size: 17px; }
.foot .hint { margin-left: 10px; background: none; }

/* Dialog */
.backdrop {
  position: absolute;
  inset: 0;
  display: flex;
  align-items: center;
  justify-content: center;
  background: rgba(0, 0, 0, 0.5);
}
.dialog {
  position: relative;
  width: 938px;
  max-width: 90%;
  padding: 52px 38px 44px;
  border-radius: 11px;
  background: #fdfdfd;
  box-shadow: 0 10px 40px rgba(0, 0, 0, 0.5);
}
.dismiss { position: absolute; top: 27px; right: 37px; color: #14679b; }
.dialog h2 { margin: 0 0 26px; padding: 4px 12px 38px; border-bottom: 1px solid #dcdcdc; font: 500 26px/36px "Inter", sans-serif; color: #262626; }
.field { display: flex; align-items: center; margin: 0 12px 34px; font-size: 18px; color: #123a5e; }
.field label { width: 269px; }
.select-wrap { position: relative; flex: 1; display: flex; align-items: center; }
.select-wrap svg { position: absolute; right: 17px; pointer-events: none; }
.select-wrap select {
  width: 100%;
  height: 46px;
  padding: 2px 18px 0;
  border: 1px solid #1a75bb;
  border-radius: 4px;
  outline: 0;
  appearance: none;
  background: #fdfdfd;
  color: #14507f;
  box-shadow: 0 0 0 3px #def0fc;
}
.buttons { display: flex; gap: 37px; margin-left: 12px; }
.btn { position: relative; width: 168px; height: 59px; padding: 0; border: 2px solid #e0e0e0; border-radius: 5px; background: #fdfdfd; font-size: 20px; color: #4c4c4c; }
.btn.primary { width: 162px; border: 0; background: #11577f; color: #fff; }
.pointer { position: absolute; left: 38px; top: 34px; }

/* Taskbar */
.taskbar { position: relative; display: flex; align-items: center; height: 60px; padding-bottom: 1px; border-top: 1px solid #b9b9b9; background: #d9d9d9; color: #222; }
.launcher { flex: 1; display: flex; align-items: center; margin-left: 24%; }
.task-search {
  display: flex;
  align-items: center;
  gap: 13px;
  width: 273px;
  height: 39px;
  margin: 0 4px 0 18px;
  padding: 0 14px;
  border-radius: 20px;
  border-bottom: 1px solid #bbb;
  background: #f3f3f3;
  font-size: 17px;
}
.task-search input::placeholder { color: #5c5c5c; opacity: 1; }
.task { position: relative; display: flex; align-items: center; justify-content: center; width: 55px; height: 48px; }
.running::after { content: ""; position: absolute; bottom: 0; left: 23px; width: 9px; height: 4px; border-radius: 2px; background: #808080; }
.focus { width: 48px; margin-left: 2px; border-radius: 5px; background: #eee; }
.focus::after { left: 14px; width: 20px; background: #0a74d0; }
.badge { position: absolute; top: 3px; right: 6px; width: 19px; height: 19px; border-radius: 50%; font-size: 12px; line-height: 19px; text-align: center; color: #fff; }
.badge.red { background: #d81458; box-shadow: inset 0 0 0 2px #47152b; }
.badge.blue { background: #0b5a9d; right: 3px; }
.tray { display: flex; align-items: center; gap: 20px; padding-right: 24px; font-size: 15px; line-height: 20px; text-align: right; }
.status { display: flex; gap: 10px; }
```
